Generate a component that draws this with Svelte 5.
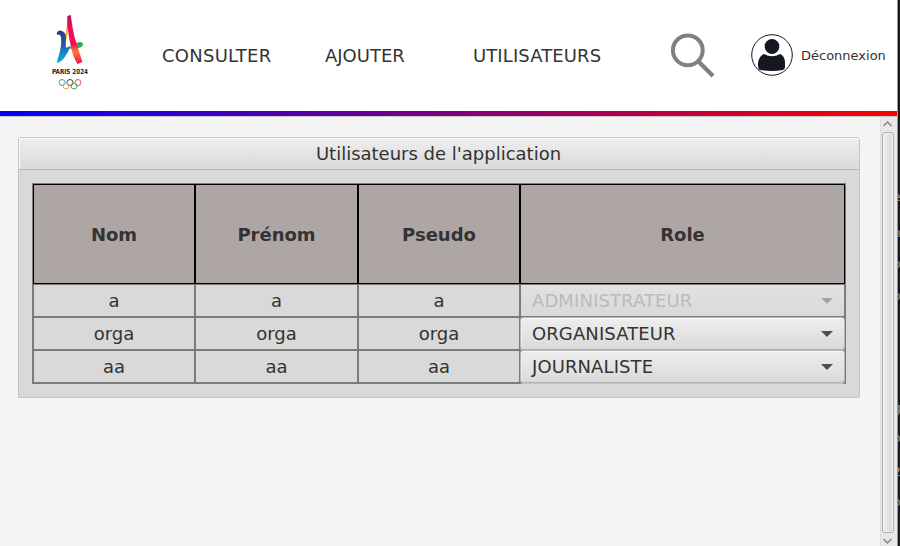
<script>
  const users = [
    { name: 'a', role: 'ADMINISTRATEUR', disabled: true },
    { name: 'orga', role: 'ORGANISATEUR', disabled: false },
    { name: 'aa', role: 'JOURNALISTE', disabled: false }
  ];
  const headings = ['Nom', 'Prénom', 'Pseudo', 'Role'];
  const behind = [
    { t: '|', y: 144 }, { t: 'e', y: 190 }, { t: 'n', y: 226 }, { t: 'o', y: 257 }, { t: 'o', y: 289 },
    { t: 'g', y: 401 }, { t: 'o', y: 431 }, { t: '2', y: 465 }, { t: 'o', y: 495 }
  ];
</script>

<div class="screen">
  <div class="window">
    <header>
      <svg class="logo" width="44" height="78" viewBox="0 0 44 78">
        <defs>
          <linearGradient id="tower" x1="0" y1="0" x2="0" y2="1">
            <stop offset="0" stop-color="#b0154f" /><stop offset=".2" stop-color="#e80c5c" />
            <stop offset=".6" stop-color="#f4104f" /><stop offset=".75" stop-color="#ff7637" /><stop offset=".88" stop-color="#f5443f" /><stop offset="1" stop-color="#ec1258" />
          </linearGradient>
          <linearGradient id="two" x1="0" y1="0" x2="0" y2="1">
            <stop offset="0" stop-color="#253a80" /><stop offset=".5" stop-color="#2463aa" /><stop offset="1" stop-color="#05b9e5" />
          </linearGradient>
          <linearGradient id="left" x1="0" y1="0" x2="0" y2="1">
            <stop offset="0" stop-color="#da1455" /><stop offset=".4" stop-color="#ff8b26" />
            <stop offset=".7" stop-color="#ffd31b" /><stop offset="1" stop-color="#ffe36a" />
          </linearGradient>
        </defs>
        <path d="M17 36L24 33Q29 29 32 29Q35 29 35 32Q32 36 27 35Q21 35 16 39Z" fill="#33a85b" />
        <path d="M19.500 4C19 17 17 27 13.500 36L16.500 34C18.500 28 20.500 18 20.500 10Z" fill="url(#left)" />
        <path d="M19.300 3L22.800 2C24 12 25.500 22 29 32Q31.500 40 34.500 49L29.500 51C26 46 24 39 22.500 32C20.500 23 19.300 13 19.300 3Z" fill="url(#tower)" />
        <path d="M9 22Q8 18 12 17.500Q18 18 18 25Q17.500 30 18 35L22 33Q21 38 18 42C15 47 12 50 8.500 49.500C11 43 14 33 13 25Q12.500 20 9 22Z" fill="url(#two)" />
        <text x="4" y="61" textLength="36" lengthAdjust="spacingAndGlyphs">PARIS 2024</text>
        <g fill="none" stroke-width="1">
          <circle cx="14" cy="69.500" r="3" stroke="#4698cc" /><circle cx="22" cy="69.500" r="3" stroke="#444" />
          <circle cx="30" cy="69.500" r="3" stroke="#e45661" /><circle cx="18" cy="73" r="3" stroke="#dcaf46" />
          <circle cx="26" cy="73" r="3" stroke="#45a66b" />
        </g>
      </svg>
      <nav>
        <span class="n1">CONSULTER</span>
        <span class="n2">AJOUTER</span>
        <span class="n3">UTILISATEURS</span>
      </nav>
      <svg class="search" width="46" height="46" viewBox="0 0 46 46" fill="none" stroke="#808080">
        <circle cx="17.800" cy="18.300" r="14.900" stroke-width="4" />
        <path d="M28 29L43 44" stroke-width="4.200" />
      </svg>
      <svg class="avatar" width="42" height="42" viewBox="0 0 42 42">
        <circle cx="21" cy="21" r="20.300" fill="#fff" stroke="#151820" stroke-width="1" />
        <circle cx="21" cy="12.500" r="7.400" fill="#151820" />
        <path d="M13 20Q21 24.500 29 20Q34 22 34 29V33Q34 35 32 36Q21 38 9 36Q7 35 7 32V29Q8 22 13 20Z" fill="#151820" />
      </svg>
      <span class="logout">Déconnexion</span>
    </header>
    <div class="stripe"></div>
    <div class="body">
      <main>
        <section class="panel">
          <h1>Utilisateurs de l'application</h1>
          <div class="table">
            {#each headings as heading}<div class="head">{heading}</div>{/each}
            {#each users as user}
              <div class="cell">{user.name}</div>
              <div class="cell">{user.name}</div>
              <div class="cell">{user.name}</div>
              <div class="combo" class:disabled={user.disabled}>
                <span>{user.role}</span>
                <i></i>
              </div>
            {/each}
          </div>
        </section>
      </main>
      <aside>
        <svg width="17" height="15" viewBox="0 0 17 15" fill="none" stroke="#858585" stroke-width="1.400"><path d="M3.500 9L7.500 5L11.500 9" /></svg>
        <div class="thumb"></div>
        <svg width="17" height="13" viewBox="0 0 17 13" fill="none" stroke="#858585" stroke-width="1.400"><path d="M3.500 6L7.500 10L11.500 6" /></svg>
      </aside>
    </div>
  </div>
  <div class="edge">
    {#each behind as b}<span style="top: {b.y}px">{b.t}</span>{/each}
  </div>
</div>

<style>
  .screen { width: 900px; height: 546px; display: flex; overflow: hidden; font: 18px/22px "DejaVu Sans", sans-serif; color: #333; }
  .window { width: 897px; height: 546px; display: flex; flex-direction: column; background: #f4f4f4; }
  .edge { position: relative; box-sizing: border-box; width: 3px; background: #181818; border-left: 1px solid #999; overflow: hidden; }
  .edge span { position: absolute; left: -5px; font: 13px/13px "DejaVu Sans Mono", monospace; color: #999; }
  header { height: 111px; background: #fff; display: flex; align-items: center; box-sizing: border-box; flex: none; }
  .logo { margin: -7px 0 0 48px; flex: none; overflow: visible; }
  .logo text { font: bold 7px "DejaVu Sans", sans-serif; fill: #222; }
  nav { display: flex; margin-left: 70px; width: 508px; flex: none; }
  nav span { white-space: nowrap; }
  .n1 { width: 163px; letter-spacing: .25px; }
  .n2 { width: 148px; }
  .n3 { letter-spacing: .1px; }
  .search { margin: -1px 0 0; flex: none; }
  .avatar { margin: -1px 0 0 35px; flex: none; }
  .logout { margin-left: 8px; font-size: 13px; white-space: nowrap; }
  .stripe { height: 5px; background: linear-gradient(90deg, #00f, #f00); flex: none; }
  .body { flex: 1; display: flex; border-top: 1px solid #c8c8c8; box-sizing: border-box; }
  main { width: 880px; padding: 20px 20px 0 18px; box-sizing: border-box; }
  .panel { height: 261px; background: #d9d9d9; border: 1px solid #c5c5c5; border-radius: 3px 3px 0 0; box-sizing: border-box; }
  h1 { margin: 0; padding-right: 1px; height: 32px; box-sizing: border-box; border-bottom: 1px solid #b7b7b7; background: linear-gradient(#eee, #dadada); box-shadow: inset 1px 1px 0 #fafafa; border-radius: 2px 2px 0 0; font-size: 18px; font-weight: normal; line-height: 31px; text-align: center; }
  .table { margin: 13px 0 0 13px; width: 814px; height: 201px; box-sizing: border-box; padding: 2px; display: grid; gap: 2px; grid-template-columns: 160px 161px 160px 323px; grid-template-rows: 98px repeat(3, 31px); background: #7b7b7b; }
  .head { background: #aea5a5; box-shadow: 0 0 0 1px #000; display: flex; align-items: center; justify-content: center; font-weight: bold; padding-top: 2px; }
  .cell { background: #d9d9d9; text-align: center; line-height: 31px; }
  .combo { margin: -1px; position: relative; border: 1px solid #b4b4b4; border-radius: 3px; box-shadow: inset 0 1px 0 #fafafa, inset 1px 0 0 #eee, 0 1px 0 #c5c5c5; background: linear-gradient(#eee, #dadada); display: flex; align-items: center; justify-content: space-between; padding: 0 11px; }
  .combo span { letter-spacing: .1px; }
  .combo i { width: 0; height: 0; border: 6px solid transparent; border-top-color: #4d4d4d; border-bottom: 0; }
  .disabled { margin: 0; border: 0; border-radius: 0; color: #bbb; background: linear-gradient(#e2e2e2, #d9d9d9); box-shadow: none; }
  .disabled i { border-top-color: #a4a4a4; }
  aside { width: 17px; background: #e8e8e8; border-left: 1px solid #dedede; box-sizing: border-box; display: flex; flex-direction: column; }
  aside svg { flex: none; margin-left: -1px; }
  .thumb { flex: 1; width: 12px; margin-left: 1px; box-sizing: border-box; border: 1px solid #ababab; border-radius: 3px; background: linear-gradient(90deg, #eee, #dadada); box-shadow: inset 0 0 0 1px #f5f5f5; }
</style>
